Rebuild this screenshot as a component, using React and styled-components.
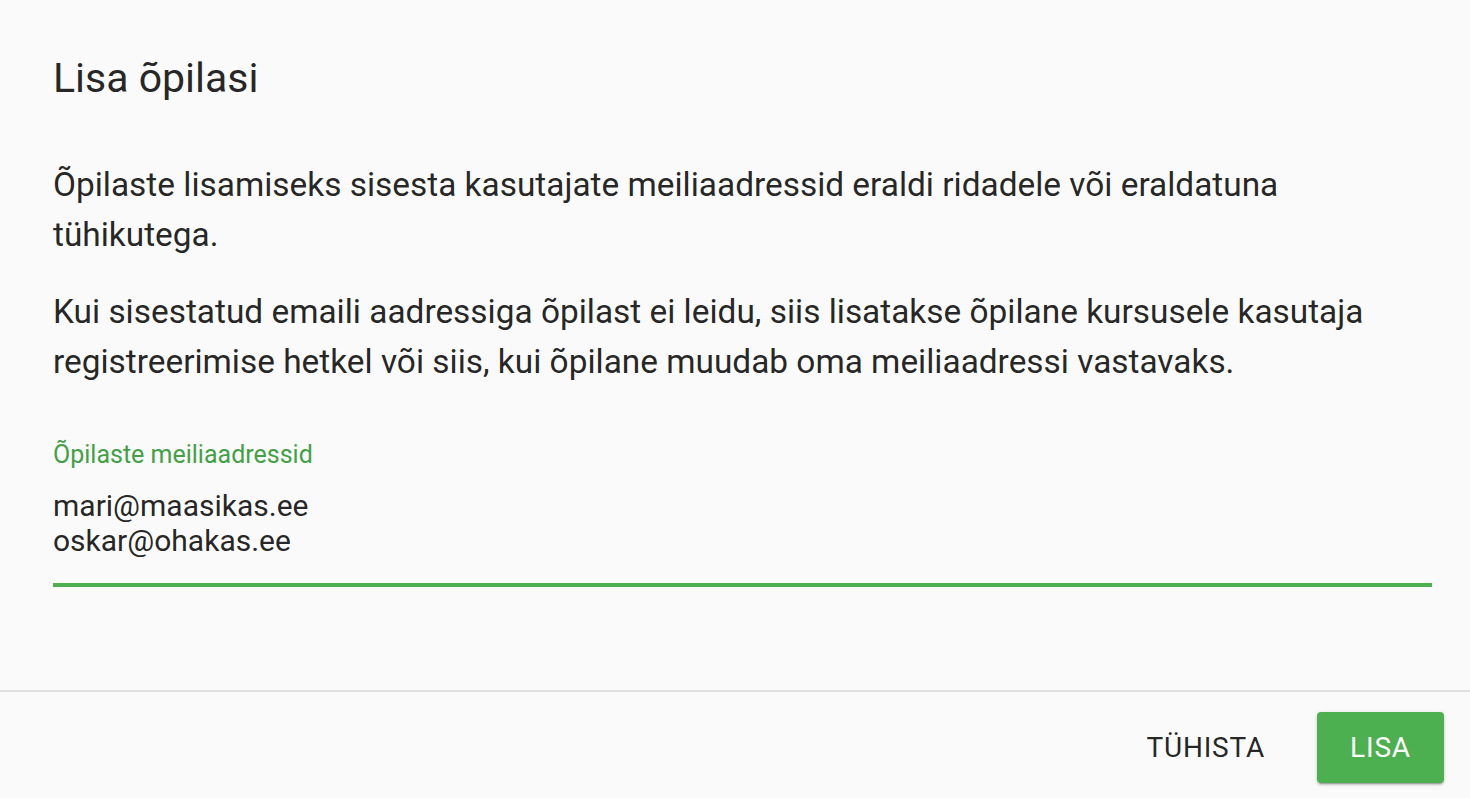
import React, { useState } from 'react';
import styled, { createGlobalStyle } from 'styled-components';

const GlobalStyle = createGlobalStyle`
  html, body {
    margin: 0;
    padding: 0;
    background: #fafafa;
  }
  body {
    font-family: Roboto, "Liberation Sans", Arial, sans-serif;
    color: rgba(0, 0, 0, 0.87);
  }
`;

const Dialog = styled.div`
  width: 1470px;
  height: 798px;
  background: #fafafa;
  display: flex;
  flex-direction: column;
  overflow: hidden;
`;

const Title = styled.h2`
  margin: 0;
  padding: 52px 52px 0 53px;
  font-size: 41px;
  font-weight: 400;
  line-height: 52px;
  color: rgba(0, 0, 0, 0.87);
`;

const Content = styled.div`
  flex: 1;
  padding: 56px 38px 0 53px;
`;

const Paragraph = styled.p`
  margin: 0 0 27px 0;
  font-size: 33.4px;
  line-height: 50px;
  color: rgba(0, 0, 0, 0.87);
`;

const Field = styled.div`
  margin-top: 53px;
  display: flex;
  flex-direction: column;
`;

const Label = styled.label`
  font-size: 25px;
  line-height: 30px;
  color: #43a047;
`;

const TextArea = styled.textarea`
  margin-top: 18px;
  border: none;
  outline: none;
  resize: none;
  background: transparent;
  font-family: inherit;
  font-size: 30px;
  line-height: 35px;
  color: rgba(0, 0, 0, 0.87);
  padding: 0;
  height: 70px;
  overflow: hidden;
`;

const Underline = styled.div`
  margin-top: 25px;
  height: 4px;
  background: #4caf50;
`;

const Footer = styled.div`
  border-top: 2px solid #e0e0e0;
  height: 108px;
  flex-shrink: 0;
  box-sizing: border-box;
  display: flex;
  justify-content: flex-end;
  align-items: flex-start;
  gap: 22px;
  padding: 20px 26px 0 0;
`;

const Button = styled.button`
  font-family: inherit;
  font-size: 28px;
  font-weight: 400;
  letter-spacing: 0.8px;
  text-transform: uppercase;
  border: none;
  border-radius: 4px;
  height: 71px;
  padding: 0 ${p => (p.primary ? '32px' : '30px')};
  min-width: 127px;
  cursor: pointer;
  background: ${p => (p.primary ? '#4caf50' : 'transparent')};
  color: ${p => (p.primary ? '#ffffff' : 'rgba(0, 0, 0, 0.87)')};
  box-shadow: ${p =>
    p.primary
      ? '0px 3px 1px -2px rgba(0,0,0,0.2), 0px 2px 2px 0px rgba(0,0,0,0.14), 0px 1px 5px 0px rgba(0,0,0,0.12)'
      : 'none'};
`;

const App = () => {
  const [emails, setEmails] = useState('mari@maasikas.ee\noskar@ohakas.ee');

  return (
    <Dialog>
      <GlobalStyle />
      <Title>Lisa õpilasi</Title>
      <Content>
        <Paragraph>
          Õpilaste lisamiseks sisesta kasutajate meiliaadressid eraldi ridadele või eraldatuna tühikutega.
        </Paragraph>
        <Paragraph>
          Kui sisestatud emaili aadressiga õpilast ei leidu, siis lisatakse õpilane kursusele kasutaja
          registreerimise hetkel või siis, kui õpilane muudab oma meiliaadressi vastavaks.
        </Paragraph>
        <Field>
          <Label>Õpilaste meiliaadressid</Label>
          <TextArea value={emails} onChange={e => setEmails(e.target.value)} rows={2} />
          <Underline />
        </Field>
      </Content>
      <Footer>
        <Button>Tühista</Button>
        <Button primary>Lisa</Button>
      </Footer>
    </Dialog>
  );
};

export default App;
